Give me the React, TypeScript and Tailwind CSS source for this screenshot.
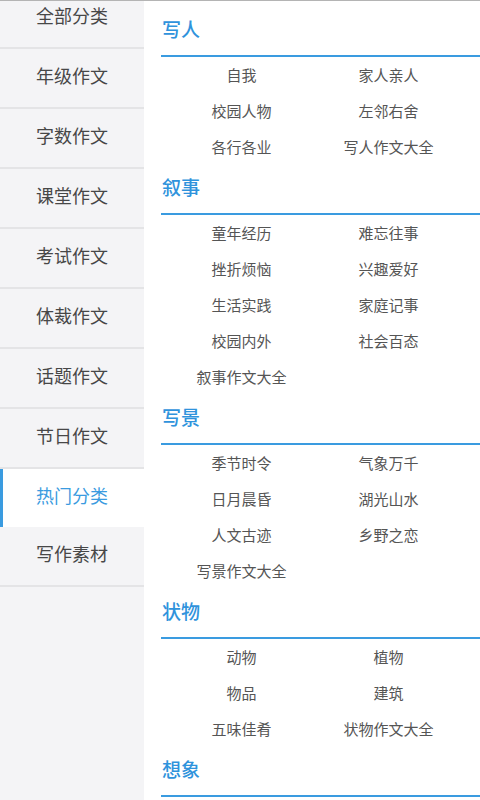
import { useState } from 'react'

const menu = ['全部分类', '年级作文', '字数作文', '课堂作文', '考试作文', '体裁作文', '话题作文', '节日作文', '热门分类', '写作素材']

const sections: { title: string; items: string[] }[] = [
  { title: '写人', items: ['自我', '家人亲人', '校园人物', '左邻右舍', '各行各业', '写人作文大全'] },
  { title: '叙事', items: ['童年经历', '难忘往事', '挫折烦恼', '兴趣爱好', '生活实践', '家庭记事', '校园内外', '社会百态', '叙事作文大全'] },
  { title: '写景', items: ['季节时令', '气象万千', '日月晨昏', '湖光山水', '人文古迹', '乡野之恋', '写景作文大全'] },
  { title: '状物', items: ['动物', '植物', '物品', '建筑', '五味佳肴', '状物作文大全'] },
  { title: '想象', items: [] },
]

export default function App() {
  const [active, setActive] = useState(8)

  return (
    <div
      className="w-[480px] h-[800px] overflow-hidden flex flex-col bg-white"
      style={{ fontFamily: '"Noto Sans CJK SC", "Noto Sans", sans-serif' }}
    >
      <div className="h-px bg-[#b4b4b4] shrink-0" />
      <div className="flex flex-1 min-h-0">
        {/* 左侧分类 */}
        <div className="w-[144px] shrink-0 bg-[#f4f4f6] overflow-hidden">
          <div className="-mt-[12px]">
            {menu.map((name, i) => (
              <button
                key={name}
                onClick={() => setActive(i)}
                className={`relative w-full flex items-center justify-center pb-[5px] text-[18px] ${
                  i === active ? 'h-[58px] bg-white text-[#3a9be0]' : 'h-[60px] border-b-2 border-[#e4e4e6] text-[#474747]'
                }`}
              >
                {i === active && <span className="absolute left-0 top-0 bottom-0 w-[3px] bg-[#3a9be0]" />}
                {name}
              </button>
            ))}
          </div>
        </div>

        {/* 右侧内容 */}
        <div className="flex-1 overflow-hidden pl-[17px] pt-[6px]">
          {sections.map((s) => (
            <div key={s.title}>
              <div className="pt-[8px] pb-[12px] pl-px leading-[28px] text-[19px] font-medium text-[#2f93dc]">{s.title}</div>
              <div className="h-[2px] bg-[#3a9be0]" />
              <div className="ml-[7px] w-[294px] grid grid-cols-2">
                {s.items.map((it) => (
                  <div key={it} className="h-[36px] flex items-center justify-center text-[15px] text-[#555]">
                    {it}
                  </div>
                ))}
              </div>
            </div>
          ))}
        </div>
      </div>
    </div>
  )
}
